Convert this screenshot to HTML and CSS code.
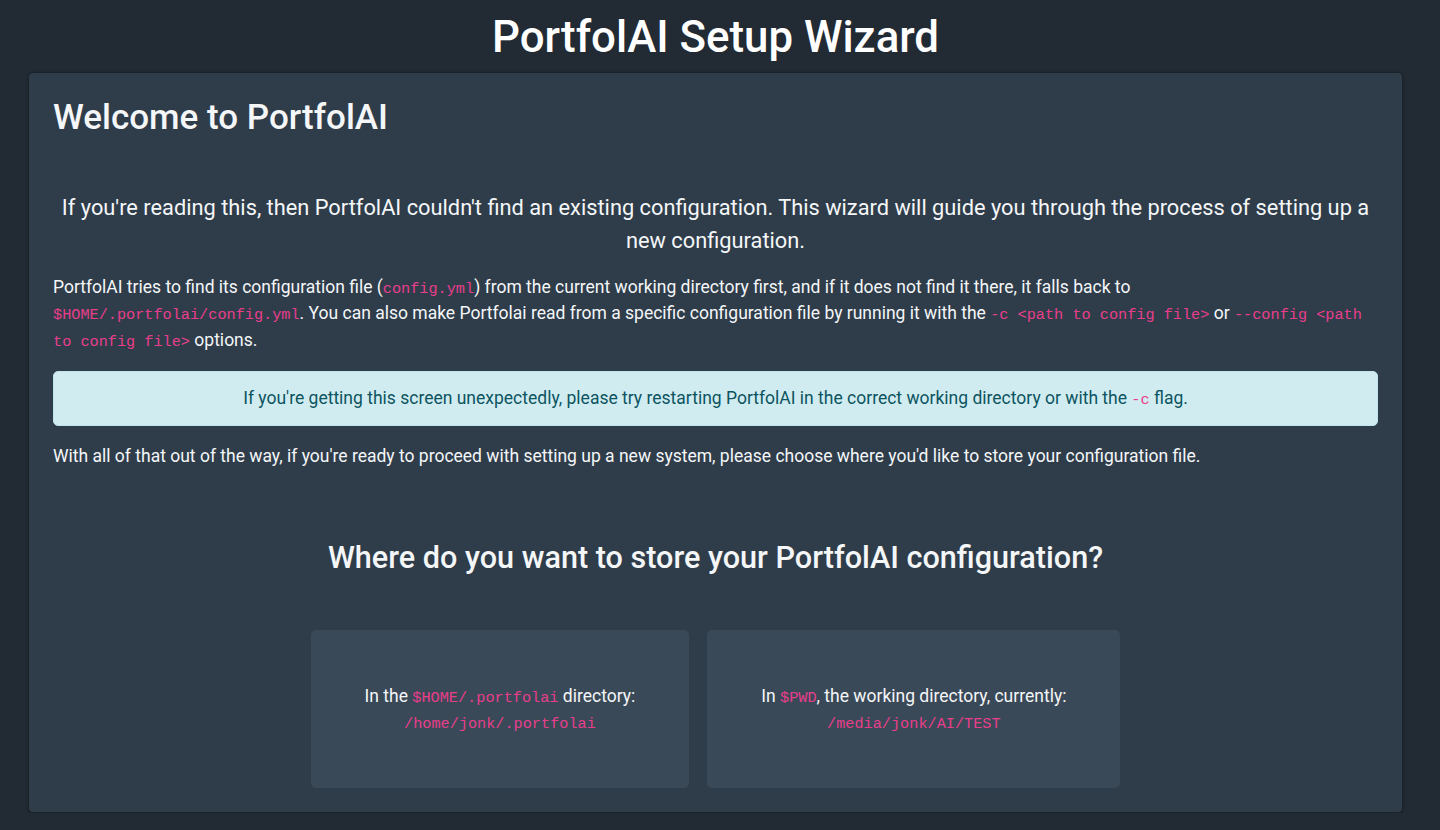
FILE: index.html
```html
<!DOCTYPE html>
<html lang="en">
<head>
<meta charset="utf-8">
<title>PortfolAI Setup Wizard</title>
<link rel="stylesheet" href="styles.css">
</head>
<body>
<div class="page">
  <h1 class="title">PortfolAI Setup Wizard</h1>
  <div class="card">
    <h2 class="welcome">Welcome to PortfolAI</h2>
    <p class="lead">If you're reading this, then PortfolAI couldn't find an existing configuration. This wizard will guide you through the process of setting up a new configuration.</p>
    <p class="text">PortfolAI tries to find its configuration file (<code>config.yml</code>) from the current working directory first, and if it does not find it there, it falls back to <code>$HOME/.portfolai/config.yml</code>. You can also make Portfolai read from a specific configuration file by running it with the <code>-c &lt;path to config file&gt;</code> or <code>--config &lt;path to config file&gt;</code> options.</p>
    <div class="alert">If you're getting this screen unexpectedly, please try restarting PortfolAI in the correct working directory or with the <code>-c</code> flag.</div>
    <p class="text">With all of that out of the way, if you're ready to proceed with setting up a new system, please choose where you'd like to store your configuration file.</p>
    <h2 class="question">Where do you want to store your PortfolAI configuration?</h2>
    <div class="options">
      <div class="option">
        <div>In the <code>$HOME/.portfolai</code> directory:</div>
        <div><code>/home/jonk/.portfolai</code></div>
      </div>
      <div class="option">
        <div>In <code>$PWD</code>, the working directory, currently:</div>
        <div><code>/media/jonk/AI/TEST</code></div>
      </div>
    </div>
  </div>
</div>
</body>
</html>
```
FILE: styles.css
```css
html, body {
  margin: 0;
  padding: 0;
}
body {
  background: #222a33;
  color: #f4f6f8;
  font-family: Roboto, "Liberation Sans", sans-serif;
  font-size: 17.5px;
  line-height: 1.5;
}
.page {
  margin: 0 37px 0 28px;
}
.title {
  margin: 0;
  padding-top: 11px;
  font-size: 43.8px;
  font-weight: 500;
  line-height: 1.2;
  text-align: center;
  color: #ffffff;
}
.card {
  margin-top: 8px;
  background: #2f3d4a;
  border: 1px solid #1b232a;
  border-radius: 5px;
  padding: 24px;
  box-shadow: 0 1px 3px rgba(0,0,0,0.25);
}
.welcome {
  margin: 0;
  font-size: 35px;
  font-weight: 500;
  line-height: 1.2;
}
.lead {
  margin: 52px 0 17px;
  font-size: 21.8px;
  line-height: 33px;
  text-align: center;
}
.text {
  margin: 0 0 17.5px;
  line-height: 26.5px;
}
code {
  font-family: "Liberation Mono", "Courier New", monospace;
  font-size: 0.87em;
  line-height: 1;
  color: #e83e8c;
}
.alert {
  margin: 0 0 17.5px;
  padding: 13.3px 20px;
  background: #d1ecf1;
  border: 1px solid #bee5eb;
  border-radius: 5px;
  color: #0c5460;
  text-align: center;
  line-height: 26.4px;
}
.question {
  margin: 70px 0 0;
  font-size: 30.6px;
  font-weight: 500;
  line-height: 1.2;
  text-align: center;
}
.options {
  display: flex;
  justify-content: center;
  gap: 18px;
  margin-top: 54px;
}
.option {
  background: #3a4957;
  border-radius: 5px;
  padding: 52.6px 54px;
  text-align: center;
  line-height: 26.4px;
}
```
